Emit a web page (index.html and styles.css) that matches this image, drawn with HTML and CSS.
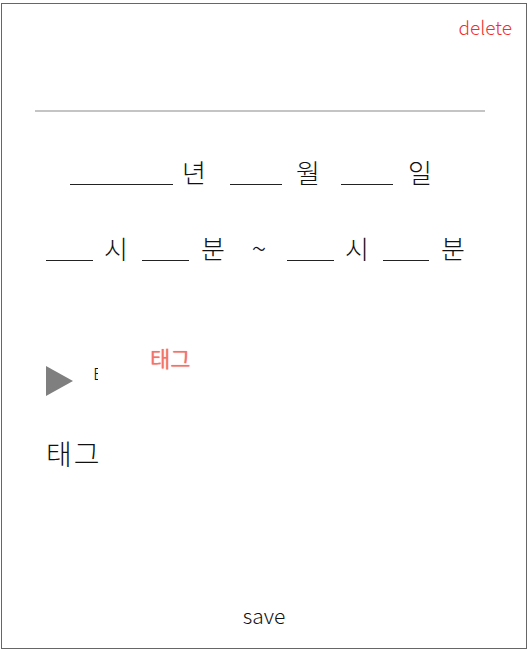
FILE: index.html
```html
<!DOCTYPE html>
<html lang="ko">
<head>
<meta charset="utf-8">
<link rel="stylesheet" href="styles.css">
</head>
<body>
<div class="frame">
  <div class="top">
    <span class="delete">delete</span>
  </div>
  <div class="divider"></div>
  <div class="row date">
    <span class="blank d1"></span><span class="unit u1">년</span>
    <span class="blank d2"></span><span class="unit u2">월</span>
    <span class="blank d3"></span><span class="unit u3">일</span>
  </div>
  <div class="row time">
    <span class="blank t1"></span><span class="unit v1">시</span>
    <span class="blank t2"></span><span class="unit v2">분</span>
    <span class="tilde">~</span>
    <span class="blank t3"></span><span class="unit v3">시</span>
    <span class="blank t4"></span><span class="unit v4">분</span>
  </div>
  <div class="tags">
    <div class="tag-head">
      <span class="triangle"></span>
      <span class="clip"><span>태그</span></span>
      <span class="tag-red">태그</span>
    </div>
    <div class="tag-label">태그</div>
  </div>
  <div class="save">save</div>
</div>
</body>
</html>
```

FILE: styles.css
```css
html, body {
  margin: 0;
  padding: 0;
  background: #fff;
}
body {
  font-family: "Noto Sans CJK KR", "Noto Sans", sans-serif;
  font-weight: 300;
  color: #111;
}
.frame {
  box-sizing: border-box;
  margin: 3px 0 0 1px;
  width: 526px;
  height: 646px;
  border: 1px solid #666;
  display: flex;
  flex-direction: column;
}
.top {
  display: flex;
  justify-content: flex-end;
  padding: 10px 14px 0 0;
  height: 40px;
  box-sizing: border-box;
}
.delete {
  color: #ee2f2f;
  font-size: 19px;
  line-height: 26px;
}
.divider {
  margin: 66px 41px 0 33px;
  height: 2px;
  background: #c4c4c4;
}
.row {
  display: flex;
  align-items: flex-end;
  font-size: 26px;
  line-height: 34px;
}
.unit {
  display: inline-block;
  width: 26px;
  text-align: center;
}
.blank {
  display: inline-block;
  height: 7px;
  border-bottom: 1px solid #222;
  margin-bottom: 4px;
}
.date {
  margin-top: 43px;
  padding-left: 68px;
}
.d1 { width: 103px; margin-right: 8px; }
.u1 { margin-right: 23px; }
.d2 { width: 52px; margin-right: 13px; }
.u2 { margin-right: 20px; }
.d3 { width: 52px; margin-right: 14px; }

.time {
  margin-top: 42px;
  padding-left: 44px;
}
.t1 { width: 47px; margin-right: 10px; }
.v1 { margin-right: 13px; }
.t2 { width: 47px; margin-right: 11px; }
.tilde {
  display: inline-block;
  width: 40px;
  text-align: center;
  margin: 0 8px 0 13px;
  font-size: 27px;
}
.t3 { width: 47px; margin-right: 10px; }
.v3 { margin-right: 13px; }
.t4 { width: 46px; margin-right: 11px; }

.tags {
  margin-top: 80px;
  padding-left: 44px;
}
.tag-head {
  display: flex;
  align-items: flex-start;
  height: 50px;
}
.triangle {
  margin-top: 21px;
  width: 0;
  height: 0;
  border-top: 15px solid transparent;
  border-bottom: 15px solid transparent;
  border-left: 27px solid #7f7f7f;
}
.clip {
  margin: 20px 0 0 21px;
  width: 4px;
  height: 17px;
  overflow: hidden;
  font-size: 20px;
  line-height: 20px;
  display: inline-block;
  color: #111;
}
.clip span {
  display: inline-block;
  margin-left: -1px;
}
.tag-red {
  margin-left: 52px;
  font-size: 22px;
  line-height: 24px;
  font-weight: 400;
  color: #f2736c;
  text-shadow: 0 0 1px rgba(242, 115, 108, 0.7);
}
.tag-label {
  margin-top: 40px;
  font-size: 28px;
  line-height: 36px;
  letter-spacing: 2px;
}
.save {
  margin-top: auto;
  margin-bottom: 20px;
  text-align: center;
  font-size: 21px;
  line-height: 26px;
}
```
